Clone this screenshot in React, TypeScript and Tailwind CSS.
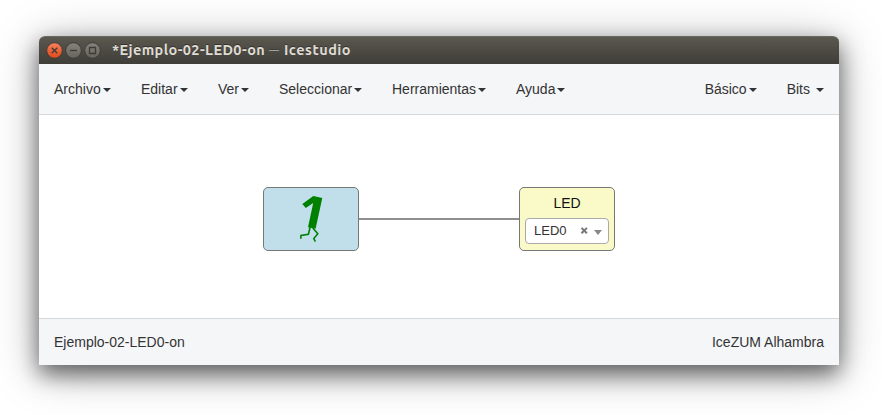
import React from "react";

const leftMenu = [
  { label: "Archivo", width: "w-[87px]" },
  { label: "Editar", width: "w-[77px]" },
  { label: "Ver", width: "w-[61px]" },
  { label: "Seleccionar", width: "w-[113px]" },
  { label: "Herramientas", width: "w-[124px]" },
  { label: "Ayuda", width: "w-[60px]" },
];

function Caret() {
  return (
    <span className="mt-px ml-0.5 h-0 w-0 border-x-4 border-t-4 border-x-transparent border-t-[#333333]" />
  );
}

function TitleBar() {
  return (
    <header className="flex h-7 shrink-0 items-center rounded-t-[6px] border-t border-[#6b6860] bg-linear-to-b from-[#5b584f] to-[#3e3d38] pl-[7px]">
      <svg width="56" height="18" viewBox="0 0 56 18" className="shrink-0">
        <defs>
          <linearGradient id="close" x1="0" y1="0" x2="0" y2="1">
            <stop offset="0" stopColor="#f58363" />
            <stop offset="0.5" stopColor="#ec6236" />
            <stop offset="1" stopColor="#df4b1c" />
          </linearGradient>
          <linearGradient id="plain" x1="0" y1="0" x2="0" y2="1">
            <stop offset="0" stopColor="#85837c" />
            <stop offset="1" stopColor="#66645d" />
          </linearGradient>
        </defs>
        <circle cx="8.5" cy="8.5" r="7.8" fill="url(#close)" stroke="#3b3934" strokeWidth="0.9" />
        <circle cx="27.5" cy="8.5" r="7.8" fill="url(#plain)" stroke="#3b3934" strokeWidth="0.9" />
        <circle cx="46.5" cy="8.5" r="7.8" fill="url(#plain)" stroke="#3b3934" strokeWidth="0.9" />
        <g fill="none" stroke="#3c3b37" strokeWidth="1.3">
          <path d="M5.7 5.7l5.6 5.6M11.3 5.7l-5.6 5.6" />
          <path d="M24 8.5h7" />
          <path d="M43.5 5.5h6v6h-6z" />
        </g>
      </svg>
      <h1 className="-mt-0.5 ml-[10px] flex whitespace-pre font-['Ubuntu','Noto_Sans',sans-serif] text-[14.5px] leading-5 font-bold text-[#dfdbd2] [text-shadow:0_-1px_0_#34332f]">
        <span className="w-[157px] tracking-[0.38px]">*Ejemplo-02-LED0-on</span>
        <span className="w-[15px] text-[10px] font-normal">—</span>
        <span className="tracking-[0.5px]">Icestudio</span>
      </h1>
    </header>
  );
}

export default function App() {
  return (
    <div className="h-[415px] w-[882px] overflow-hidden bg-white px-[39px] pt-9 font-['Liberation_Sans',Arial,sans-serif] text-[14px] leading-5 text-[#333333]">
      <div className="flex h-[329px] w-[800px] flex-col rounded-t-[6px] bg-white shadow-[0_9px_22px_rgba(0,0,0,0.55),0_6px_48px_rgba(0,0,0,0.28)]">
        <TitleBar />
        <nav className="flex h-[51px] shrink-0 items-center border-b border-[#d3d9dc] bg-[#f5f6f8] pr-[15px] pl-[15px]">
          {leftMenu.map((item) => (
            <div key={item.label} className={`flex items-center ${item.width}`}>
              {item.label}
              <Caret />
            </div>
          ))}
          <div className="ml-auto flex items-center">
            Básico
            <Caret />
          </div>
          <div className="ml-[30px] flex items-center">
            <span className="mr-1">Bits</span>
            <Caret />
          </div>
        </nav>

        <main className="relative flex-1 bg-white">
          <div className="absolute top-[103px] left-[320px] h-[2px] w-[160px] bg-[#8f8f8f]" />
          <div className="absolute top-[72px] left-[224px] h-16 w-24 rounded-[5px] border border-[#777777] bg-[#c0dfeb]">
            <svg width="94" height="62" viewBox="264 188 94 62">
              <path d="M302.3 204L313.3 195.9L322.3 198L315.6 228.8L308 227.2L313.2 203L305.8 208z" fill="green" />
              <path
                d="M310.2 227L308.4 234.2L301 235.5L300.8 238.8M312.8 228L317.8 233.8L313.8 238.5L315.4 241.6"
                fill="none"
                stroke="green"
                strokeWidth="1.6"
              />
            </svg>
          </div>
          <div className="absolute top-[72px] left-[480px] flex h-16 w-24 flex-col items-center rounded-[5px] border border-[#777777] bg-[#fafac8]">
            <span className="mt-[5px] text-[#111111]">LED</span>
            <div className="mt-[5px] flex h-[26px] w-[84px] items-center rounded border border-[#aaaaaa] bg-white pl-2 text-[13px]">
              <span>LED0</span>
              <svg width="26" height="10" viewBox="0 0 26 10" className="ml-[13px]">
                <path d="M1.5 1.9l5.4 5.4M6.9 1.9l-5.4 5.4" stroke="#777777" strokeWidth="2" />
                <path d="M14 4h8l-4 5z" fill="#888888" />
              </svg>
            </div>
          </div>
        </main>

        <footer className="flex h-[47px] shrink-0 items-center justify-between border-t border-[#d3d9dc] bg-[#f5f6f8] px-[15px]">
          <span>Ejemplo-02-LED0-on</span>
          <span>IceZUM Alhambra</span>
        </footer>
      </div>
    </div>
  );
}
